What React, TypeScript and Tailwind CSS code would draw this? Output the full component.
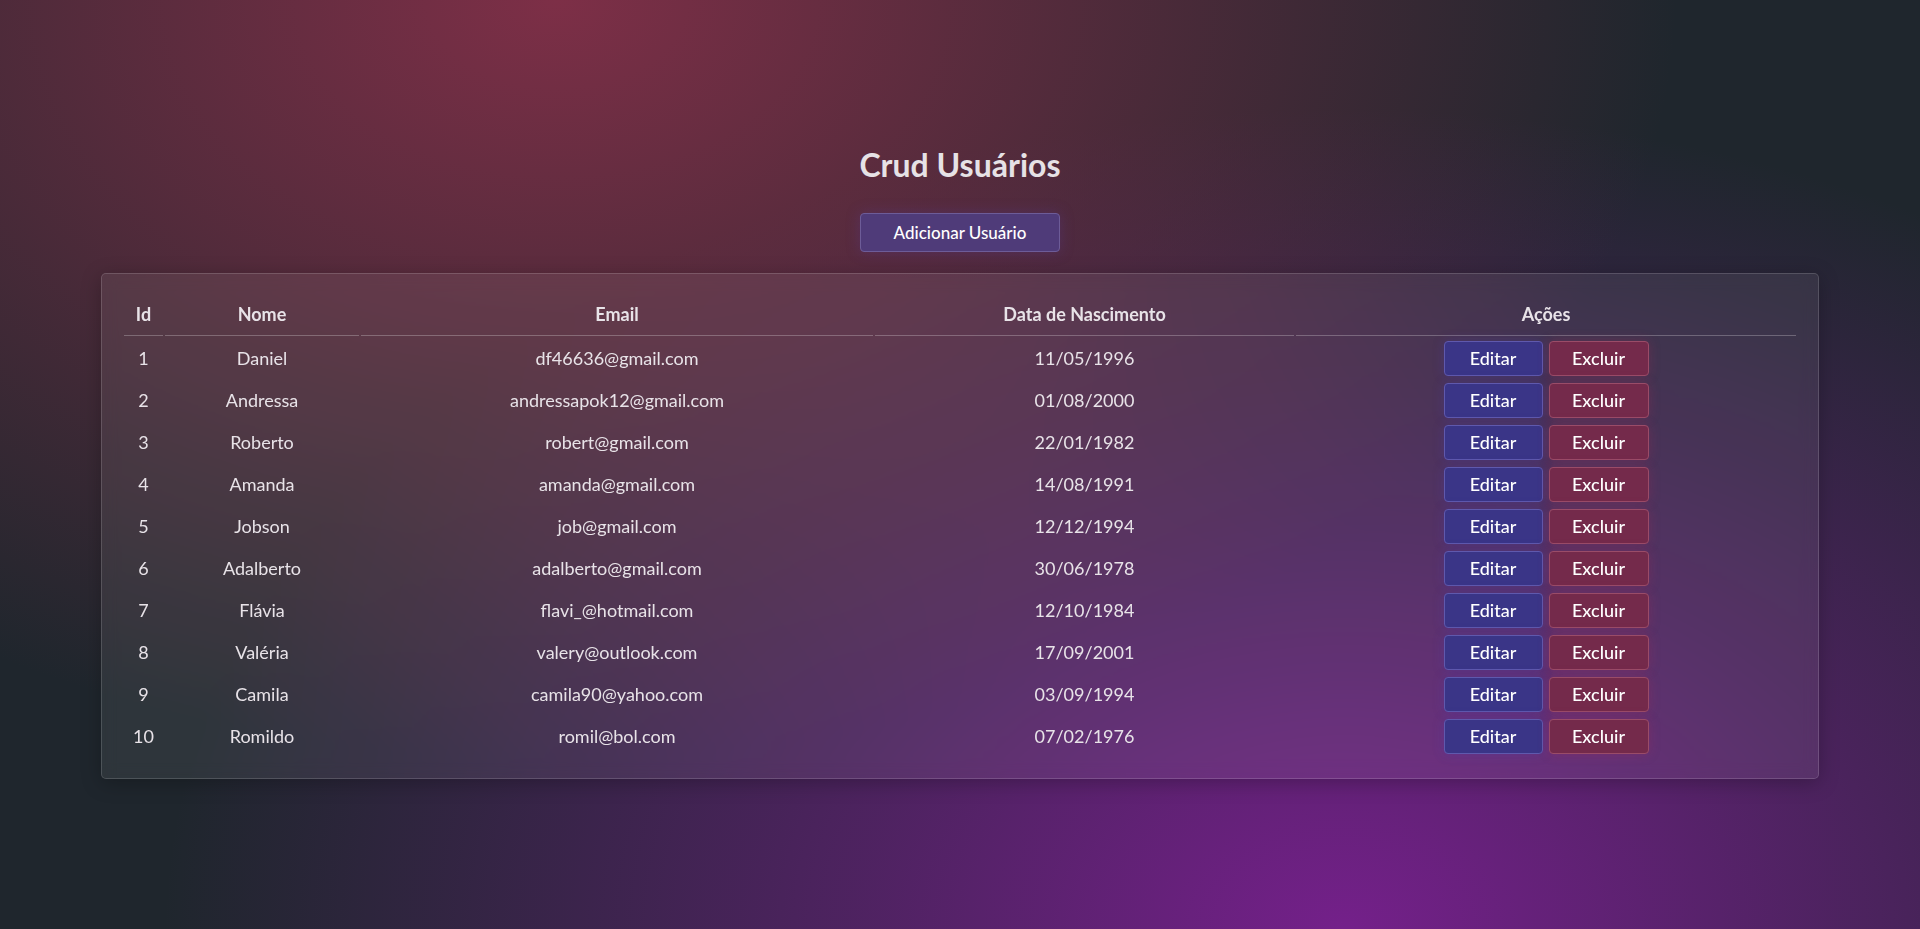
const usuarios = [
  { id: 1, nome: "Daniel", email: "df46636@gmail.com", nascimento: "11/05/1996" },
  { id: 2, nome: "Andressa", email: "andressapok12@gmail.com", nascimento: "01/08/2000" },
  { id: 3, nome: "Roberto", email: "robert@gmail.com", nascimento: "22/01/1982" },
  { id: 4, nome: "Amanda", email: "amanda@gmail.com", nascimento: "14/08/1991" },
  { id: 5, nome: "Jobson", email: "job@gmail.com", nascimento: "12/12/1994" },
  { id: 6, nome: "Adalberto", email: "adalberto@gmail.com", nascimento: "30/06/1978" },
  { id: 7, nome: "Flávia", email: "flavi_@hotmail.com", nascimento: "12/10/1984" },
  { id: 8, nome: "Valéria", email: "valery@outlook.com", nascimento: "17/09/2001" },
  { id: 9, nome: "Camila", email: "camila90@yahoo.com", nascimento: "03/09/1994" },
  { id: 10, nome: "Romildo", email: "romil@bol.com", nascimento: "07/02/1976" },
];

const App = () => {
  return (
    <div className="min-h-[929px] w-full bg-[#1f262d] bg-[image:radial-gradient(1120px_760px_at_29%_0%,#7d2f47_0%,rgba(125,47,71,0.6)_40%,transparent_100%),radial-gradient(1180px_820px_at_70%_100%,#74208a_0%,rgba(116,32,138,0.55)_42%,transparent_100%)] font-['Lato',sans-serif] text-[#e8e3e8]">
      <div className="flex flex-col items-center pt-[145px] pb-[150px]">
        {/* TITLE */}
        <h1 className="text-[32px] leading-[40px] font-bold text-[#e6e2e6]">Crud Usuários</h1>

        {/* ADD BUTTON */}
        <button className="mt-[28px] w-[200px] h-[39px] rounded-[4px] border border-[#6d5c98] bg-[#4f3b79] text-[17px] font-medium text-white shadow-[0_0_14px_rgba(90,60,150,0.35)]">
          Adicionar Usuário
        </button>

        {/* TABLE CARD */}
        <div className="mt-[21px] w-[1718px] rounded-[5px] border border-white/15 bg-white/[0.07] p-[20px] shadow-[0_4px_20px_rgba(0,0,0,0.25)] backdrop-blur-sm">
          <table className="w-full table-fixed border-separate border-spacing-[2px] text-[18px]">
            <colgroup>
              <col className="w-[39px]" />
              <col className="w-[194px]" />
              <col className="w-[512px]" />
              <col className="w-[419px]" />
              <col />
            </colgroup>
            <thead>
              <tr>
                <th className="h-[40px] border-b border-white/25 pb-[3px] font-bold">Id</th>
                <th className="h-[40px] border-b border-white/25 pb-[3px] font-bold">Nome</th>
                <th className="h-[40px] border-b border-white/25 pb-[3px] font-bold">Email</th>
                <th className="h-[40px] border-b border-white/25 pb-[3px] font-bold">Data de Nascimento</th>
                <th className="h-[40px] border-b border-white/25 pb-[3px] font-bold">Ações</th>
              </tr>
            </thead>
            <tbody>
              {usuarios.map((u) => (
                <tr key={u.id} className="h-[40px]">
                  <td className="text-center">{u.id}</td>
                  <td className="text-center">{u.nome}</td>
                  <td className="text-center">{u.email}</td>
                  <td className="text-center">{u.nascimento}</td>
                  <td className="text-center">
                    <div className="flex justify-center gap-[6px]">
                      <button className="w-[99px] h-[35px] rounded-[4px] border border-[#5f59ad] bg-[#3a3587] text-[18px] font-medium text-white shadow-[0_0_12px_rgba(70,60,180,0.3)]">
                        Editar
                      </button>
                      <button className="w-[100px] h-[35px] rounded-[4px] border border-[#9a4c68] bg-[#742a4b] text-[18px] font-medium text-white shadow-[0_0_12px_rgba(170,40,80,0.3)]">
                        Excluir
                      </button>
                    </div>
                  </td>
                </tr>
              ))}
            </tbody>
          </table>
        </div>
      </div>
    </div>
  );
};

export default App;
